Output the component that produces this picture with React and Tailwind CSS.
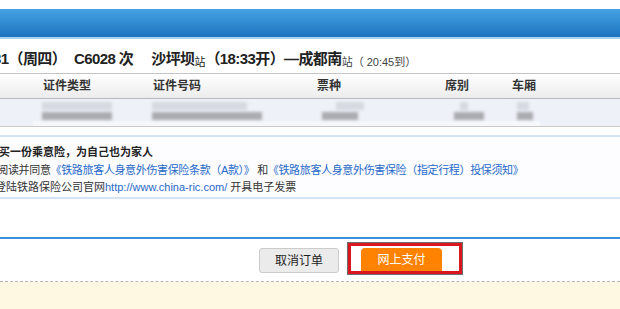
import React from 'react'

const font = { fontFamily: '"Liberation Sans", "Noto Sans CJK SC", sans-serif' }

const cols = [
  { label: '证件类型', w: 'w-[110px]' },
  { label: '证件号码', w: 'w-[164px]' },
  { label: '票种', w: 'w-[128px]' },
  { label: '席别', w: 'w-[67px]' },
  { label: '车厢', w: 'w-[60px]' },
]

function Blur({ top, bottom }) {
  return (
    <div className="flex flex-col gap-[2px] blur-[1.5px]">
      <div className={`h-[8px] bg-[#d6d9e0] ${top}`}></div>
      <div className={`h-[8px] bg-[#a9abb0] ${bottom}`}></div>
    </div>
  )
}

export default function App() {
  return (
    <div className="w-[620px] h-[309px] bg-white overflow-hidden text-[#333]" style={font}>
      <div className="h-[9px]"></div>

      {/* blue header bar */}
      <div className="h-[28px] bg-gradient-to-b from-[#45a3e3] to-[#1c74c0]"></div>
      <div className="h-[2px] bg-[#a6d4f2]"></div>

      {/* train title */}
      <div className="h-[34px] flex items-end pb-[3px] whitespace-nowrap text-[#222] tracking-[-0.6px]">
        <span className="ml-[-7px] text-[15px] font-bold">31（周四）</span>
        <span className="ml-[8px] text-[15px] font-bold">C6028 次</span>
        <span className="ml-[18px] text-[15px] font-bold">沙坪坝</span>
        <span className="text-[11px] tracking-normal">站</span>
        <span className="text-[15px] font-bold">（18:33开）—成都南</span>
        <span className="text-[11px] text-[#444] tracking-normal">站（ 20:45到）</span>
      </div>

      {/* table */}
      <div className="border-t border-[#c4c4c4]">
        <div className="h-[25px] flex items-center pl-[43px] bg-gradient-to-b from-white to-[#ececec] border-b border-[#b9b9b9] text-[12px] font-bold text-[#333]">
          {cols.map(c => (
            <div key={c.label} className={c.w}>{c.label}</div>
          ))}
        </div>
        <div className="h-[28px] bg-[#eef1f8] border-b border-[#c9c9c9] flex flex-col">
          <div className="flex pl-[42px] pt-[3px] h-[22px]">
            <div className="w-[110px]"><Blur top="w-[70px]" bottom="w-[70px]" /></div>
            <div className="w-[164px]"><Blur top="w-[95px]" bottom="w-[110px]" /></div>
            <div className="w-[128px] pl-[6px]"><Blur top="w-[28px] ml-[14px]" bottom="w-[36px]" /></div>
            <div className="w-[67px] pl-[10px]"><Blur top="w-[8px] ml-[6px]" bottom="w-[30px]" /></div>
            <div className="w-[60px] pl-[6px]"><Blur top="w-[12px]" bottom="w-[16px]" /></div>
          </div>
          <div className="ml-[33px] w-[507px] h-[5px] bg-[#f6f7fb]"></div>
        </div>
      </div>

      <div className="h-[8px]"></div>

      {/* insurance */}
      <div className="h-[64px] border-y-2 border-[#d4e4f2] bg-[#fdfdff] text-[11px] leading-[17.5px] whitespace-nowrap pt-[7px]">
        <div className="ml-[-12px] font-bold text-[#222]">购买一份乘意险，为自己也为家人</div>
        <div className="ml-[-24px] text-[#333] tracking-[-0.35px]">
          我已阅读并同意
          <span className="text-[#2769c9]">《铁路旅客人身意外伤害保险条款（A款）》</span>
          {' '}和
          <span className="text-[#2769c9]">《铁路旅客人身意外伤害保险（指定行程）投保须知》</span>
        </div>
        <div className="ml-[-16px] text-[#333]">
          请登陆铁路保险公司官网<span className="text-[#2769c9]">http://www.china-ric.com/</span> 开具电子发票
        </div>
      </div>

      <div className="h-[38px]"></div>

      {/* buttons */}
      <div className="h-[2px] bg-[#3b8fdd]"></div>
      <div className="h-[43px] flex items-start pt-[3px] pl-[259px] gap-[8px] border-b border-dashed border-[#b5b5b5]">
        <button className="mt-[6px] w-[80px] h-[25px] rounded-[3px] bg-[#ebebeb] border border-[#cccccc] text-[12px] text-[#222]">
          取消订单
        </button>
        <div className="w-[116px] h-[33px] border border-[#6e6e6e]">
          <div className="h-full border-[3px] border-[#d8181e] bg-white pl-[10px] pt-[2px]">
            <div className="w-[81px] h-full rounded-t-[4px] bg-[#ff8200] text-white text-[12px] flex items-center justify-center">
              网上支付
            </div>
          </div>
        </div>
      </div>
      <div className="h-[40px] bg-[#fef8e3]"></div>
    </div>
  )
}
